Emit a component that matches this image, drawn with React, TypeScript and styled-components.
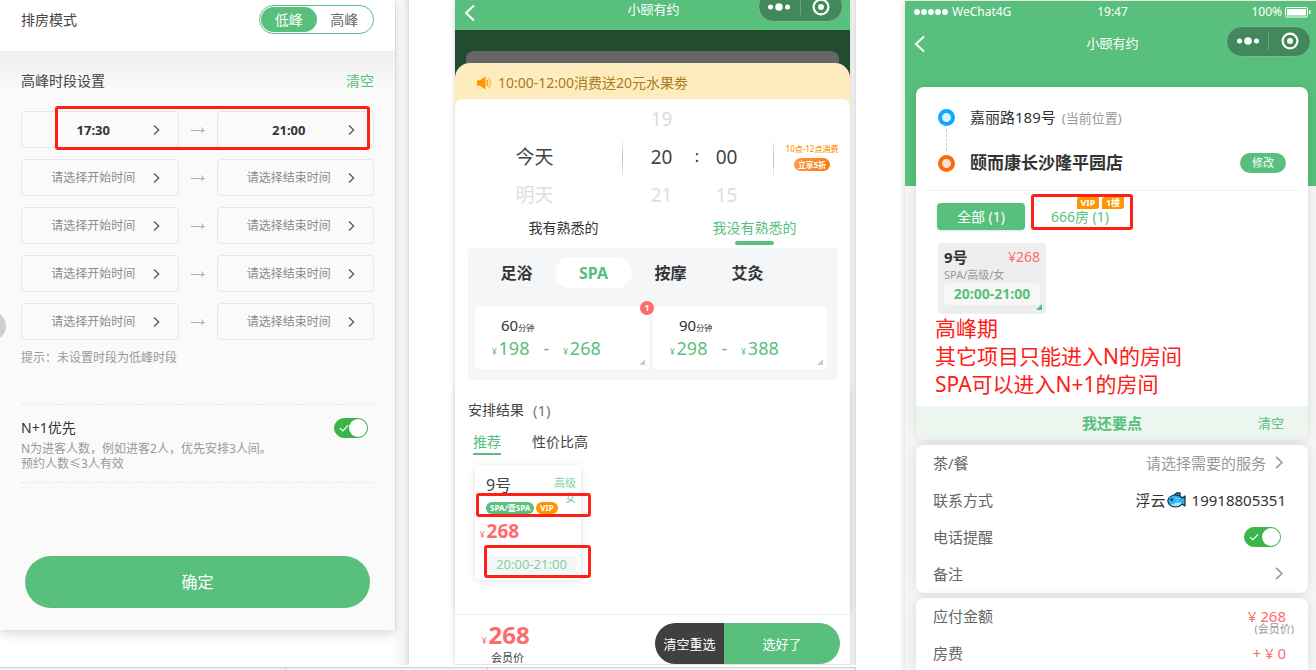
import React from "react";
import styled, { createGlobalStyle, css } from "styled-components";

const green = "#58c07c";
const coral = "#ff6b6b";
const orange = "#ff9500";
const markRed = "#ff2015";

const GlobalStyle = createGlobalStyle`
  * { box-sizing: border-box; }
  body {
    margin: 0;
    background: #fff;
    color: #333;
    font-family: "Noto Sans", "Noto Sans CJK SC", sans-serif;
    font-size: 14px;
    line-height: 20px;
  }
  button, input { font: inherit; color: inherit; margin: 0; padding: 0; border: 0; background: none; }
  button { cursor: pointer; }
  h1, h2, p { margin: 0; font-weight: 400; font-size: inherit; }
`;

/* ---------- page ---------- */

const Page = styled.main`
  display: grid;
  grid-template-columns: minmax(0, 856fr) minmax(0, 411fr);
  grid-template-rows: minmax(0, 1fr);
  column-gap: 49px;
  height: 100vh;
  min-height: 670px;
  overflow: hidden;
`;
const Board = styled.div`
  min-width: 0;
  display: flex;
  flex-direction: column;
`;
const Panels = styled.div`
  flex: 1;
  display: grid;
  grid-template-columns: minmax(0, 409fr) minmax(0, 447fr);
  padding-bottom: 2px;
  min-height: 0;
`;
const Ruler = styled.div`
  display: flex;
  flex: none;
  height: 3px;
  border-top: 1px solid #cfcfcf;
  background: #f3f3f3;
`;
const RulerCell = styled.span<{ $grow: number }>`
  flex: ${(p) => p.$grow};
  border-right: 1px solid #ccc;
`;
const Mark = styled.span<{ $box: string }>`
  position: absolute;
  inset: ${(p) => p.$box};
  border: 3px solid ${markRed};
  border-radius: 3px;
  pointer-events: none;
  z-index: 2;
`;

/* ---------- shared controls ---------- */

const SwitchBox = styled.span`
  position: relative;
  display: inline-flex;
  svg { position: absolute; left: 5px; top: 6px; pointer-events: none; }
`;
const SwitchInput = styled.input<{ $w: number }>`
  appearance: none;
  width: ${(p) => p.$w}px;
  height: 20px;
  border: 1px solid #3bb54a;
  border-radius: 10px;
  background: #3bb54a;
  cursor: pointer;
  &::after {
    content: "";
    display: block;
    width: 18px;
    height: 18px;
    margin-left: auto;
    border-radius: 9px;
    background: #fff;
  }
`;
function Switch({ id, width }: { id: string; width: number }) {
  return (
    <SwitchBox>
      <SwitchInput id={id} type="checkbox" defaultChecked $w={width} />
      <svg width="10" height="8" viewBox="0 0 10 8" fill="none" stroke="#fff" strokeWidth="1.2">
        <path d="M1 4.2 3.8 7 9 1.4" />
      </svg>
    </SwitchBox>
  );
}

const Chevron = ({ color = "#555", size = 12 }: { color?: string; size?: number }) => (
  <svg width={size} height={size} viewBox="0 0 12 12" fill="none" stroke={color} strokeWidth="1.3">
    <path d="M4 1.5 8.7 6 4 10.5" />
  </svg>
);
const BackIcon = () => (
  <svg width="12" height="18" viewBox="0 0 12 18" fill="none" stroke="#fff" strokeWidth="2">
    <path d="M10 1.5 2 9l8 7.5" />
  </svg>
);

const CapsuleBox = styled.div`
  display: flex;
  align-items: center;
  flex: none;
  width: 85px;
  height: 31px;
  border: 1px solid #7fb592;
  border-radius: 16px;
  background: #41895a;
`;
const CapsuleButton = styled.button`
  flex: 1;
  display: flex;
  align-items: center;
  justify-content: center;
  height: 17px;
  & + & { border-left: 1px solid #6aa67f; }
`;
const Capsule = () => (
  <CapsuleBox>
    <CapsuleButton aria-label="更多">
      <svg width="24" height="8" viewBox="0 0 24 8" fill="#fff">
        <circle cx="3.5" cy="4" r="2.5" />
        <circle cx="12" cy="4" r="3.8" />
        <circle cx="20.5" cy="4" r="2.5" />
      </svg>
    </CapsuleButton>
    <CapsuleButton aria-label="关闭">
      <svg width="18" height="18" viewBox="0 0 18 18">
        <circle cx="9" cy="9" r="7.4" fill="none" stroke="#fff" strokeWidth="2.2" />
        <circle cx="9" cy="9" r="3" fill="#fff" />
      </svg>
    </CapsuleButton>
  </CapsuleBox>
);

/* ---------- settings panel ---------- */

const SettingsArea = styled.div`
  padding-right: 13px;
  background: linear-gradient(to left, #e6e6e6, #f6f6f6 5px, #fbfbfb 13px, #fff 14px);
  border-right: 1px solid #ddd;
`;
const Settings = styled.section`
  position: relative;
  height: 630px;
  display: flex;
  flex-direction: column;
  background: #fafafa;
  box-shadow: 0 4px 10px #00000026, 1px 0 0 #e8e8e8;
`;
const ModeBar = styled.div`
  display: flex;
  justify-content: space-between;
  padding: 5px 21px 17px;
  background: #fff;
  line-height: 29px;
  color: #444;
`;
const ModeToggle = styled.div`
  display: flex;
  width: 115px;
  height: 29px;
  padding: 1px;
  border: 1px solid ${green};
  border-radius: 15px;
`;
const ModeOption = styled.button<{ $on?: boolean }>`
  flex: 1;
  line-height: 25px;
  border-radius: 13px;
  color: ${(p) => (p.$on ? "#fff" : "#666")};
  background: ${(p) => (p.$on ? green : "transparent")};
`;
const SettingsBody = styled.div`
  flex: 1;
  display: flex;
  flex-direction: column;
  padding: 20px 21px 0;
  background: linear-gradient(#efefef, #fafafa 40px);
`;
const TitleRow = styled.div`
  display: flex;
  justify-content: space-between;
  margin-bottom: 20px;
  color: #444;
`;
const TextButton = styled.button<{ $size?: number }>`
  color: ${green};
  font-size: ${(p) => p.$size ?? 14}px;
`;
const Slots = styled.div`
  display: grid;
  gap: 11px;
`;
const SlotRow = styled.div`
  position: relative;
  display: grid;
  grid-template-columns: 1fr 38px 1fr;
  place-items: center stretch;
  > svg { justify-self: center; }
`;
const SlotButton = styled.button<{ $set: boolean }>`
  display: flex;
  align-items: center;
  height: 37px;
  padding: 0 16px 0 15px;
  border: 1px solid #e6e6e6;
  border-radius: 4px;
  font-size: ${(p) => (p.$set ? 13 : 12)}px;
  font-weight: ${(p) => (p.$set ? 700 : 400)};
  color: ${(p) => (p.$set ? "#333" : "#8c8c8c")};
  span { flex: 1; text-align: center; }
`;
const Hint = styled.p`
  padding: 8px 0 36px;
  font-size: 12px;
  color: #999;
`;
const PriorityRow = styled.div`
  display: flex;
  justify-content: space-between;
  align-items: flex-start;
  padding: 13px 6px 11px 0;
  border: dashed #e8e8e8;
  border-width: 1px 0;
`;
const PriorityLabel = styled.label`
  display: block;
  color: #333;
`;
const Note = styled.p`
  font-size: 12px;
  line-height: 15px;
  color: #999;
  margin-top: 3px;
`;
const ConfirmButton = styled.button`
  margin: auto 4px 22px;
  height: 52px;
  border-radius: 26px;
  background: ${green};
  color: #fff;
  font-size: 16px;
`;
const Handle = styled.span`
  position: absolute;
  left: -24px;
  top: 311px;
  width: 30px;
  height: 30px;
  border-radius: 15px;
  background: #d0d0d0;
`;

const slots: [string, string][] = [["17:30", "21:00"], ["", ""], ["", ""], ["", ""], ["", ""]];

function SettingsPanel() {
  return (
    <SettingsArea>
      <Settings>
        <Handle />
        <ModeBar>
          <span>排房模式</span>
          <ModeToggle>
            <ModeOption $on>低峰</ModeOption>
            <ModeOption>高峰</ModeOption>
          </ModeToggle>
        </ModeBar>
        <SettingsBody>
          <TitleRow>
            <h2>高峰时段设置</h2>
            <TextButton>清空</TextButton>
          </TitleRow>
          <Slots>
            {slots.map(([from, to], i) => (
              <SlotRow key={i}>
                <SlotButton $set={!!from}><span>{from || "请选择开始时间"}</span><Chevron /></SlotButton>
                <svg width="14" height="8" viewBox="0 0 14 8" fill="none" stroke="#aaa">
                  <path d="M0 4.5h13M10 1.5l3.2 3-3.2 2" />
                </svg>
                <SlotButton $set={!!to}><span>{to || "请选择结束时间"}</span><Chevron /></SlotButton>
                {i === 0 && <Mark $box="-5px 4px -2px 34px" />}
              </SlotRow>
            ))}
          </Slots>
          <Hint>提示：未设置时段为低峰时段</Hint>
          <PriorityRow>
            <div>
              <PriorityLabel htmlFor="priority">N+1优先</PriorityLabel>
              <Note>N为进客人数，例如进客2人，优先安排3人间。<br />预约人数≤3人有效</Note>
            </div>
            <Switch id="priority" width={34} />
          </PriorityRow>
          <ConfirmButton>确定</ConfirmButton>
        </SettingsBody>
      </Settings>
    </SettingsArea>
  );
}

/* ---------- booking panel ---------- */

const BookingArea = styled.div`
  display: flex;
  padding: 0 6px 0 46px;
  background: linear-gradient(to left, #ddd, #f4f4f4 3px, #f4f4f4 5px, #fff 6px);
`;
const Booking = styled.section`
  flex: 1;
  min-width: 0;
  display: flex;
  flex-direction: column;
  background: #fff;
  border-bottom: 1px solid #e4e4e4;
  box-shadow: 0 0 5px #00000030;
  clip-path: inset(0 -6px 0 -8px);
`;
const ClippedNav = styled.header`
  display: flex;
  align-items: flex-end;
  justify-content: space-between;
  flex: none;
  height: 30px;
  padding: 0 7px 8px 9px;
  overflow: hidden;
  background: ${green};
  color: #fff;
  font-size: 13px;
  > * { flex: 1; display: flex; }
  > h1 { justify-content: center; line-height: 26px; }
  > :last-child { justify-content: flex-end; }
`;
const Backdrop = styled.div`
  padding-top: 21px;
  background: #234b30;
`;
const BackCard = styled.div`
  height: 12px;
  margin: 0 11px;
  border-radius: 8px 8px 0 0;
  background: #666;
`;
const Notice = styled.div`
  display: flex;
  align-items: center;
  gap: 6px;
  height: 44px;
  padding: 4px 22px 8px;
  border-radius: 15px 15px 0 0;
  background: #ffecbe;
  color: #a87c1c;
`;
const Sheet = styled.div`
  position: relative;
  margin-top: -8px;
  border-radius: 8px 8px 0 0;
  background: #fff;
  padding-top: 1px;
`;
const Picker = styled.div`
  display: grid;
  grid-template-columns: 1fr 152px 76px;
  height: 114px;
  font-size: 19px;
  line-height: 38px;
`;
const Wheel = styled.div<{ $pad?: number; $w?: number }>`
  display: flex;
  flex-direction: column;
  align-items: center;
  padding-right: ${(p) => p.$pad ?? 0}px;
  width: ${(p) => (p.$w ? p.$w + "px" : "auto")};
`;
const WheelItem = styled.button<{ $on?: boolean }>`
  height: 38px;
  line-height: 38px;
  color: ${(p) => (p.$on ? "#444" : "#ddd")};
`;
const TimeWheels = styled.div`
  display: flex;
  justify-content: center;
  padding-right: 8px;
  background:
    linear-gradient(#fff, #bbb 50%, #fff) left 38px / 1px 42px no-repeat,
    linear-gradient(#fff, #bbb 50%, #fff) right 38px / 1px 42px no-repeat;
`;
const Colon = styled.span`
  width: 29px;
  padding: 38px 0 0 6px;
  text-align: center;
  font-size: 16px;
  line-height: 36px;
`;
const Deal = styled.div`
  display: flex;
  flex-direction: column;
  align-items: center;
  gap: 4px;
  padding-top: 43px;
  font-size: 8px;
  font-weight: 500;
  line-height: 11px;
  white-space: nowrap;
  color: ${orange};
`;
const DealTag = styled.b`
  padding: 0 4px;
  height: 13px;
  line-height: 13px;
  border-radius: 7px;
  background: linear-gradient(90deg, #ff9a3d, #f57a16);
  color: #fff;
`;
const GuestTabs = styled.div`
  display: flex;
  height: 34px;
  padding-left: 13px;
`;
const GuestTab = styled.button<{ $on?: boolean }>`
  flex: 1;
  display: flex;
  flex-direction: column;
  align-items: center;
  padding-top: 4px;
  color: ${(p) => (p.$on ? green : "#333")};
  ${(p) => p.$on && css`
    &::after { content: ""; width: 39px; height: 4px; margin-top: 3px; border-radius: 2px; background: ${green}; }
  `}
`;
const Services = styled.div`
  margin: 0 12px 11px 13px;
  padding: 9px 11px 11px 7px;
  border-radius: 4px;
  background: #f4f6f8;
`;
const ServiceTabs = styled.div`
  display: flex;
  padding-left: 3px;
  margin-bottom: 18px;
`;
const ServiceTab = styled.button<{ $on?: boolean }>`
  width: 77px;
  height: 31px;
  border-radius: 16px;
  font-size: 16px;
  font-weight: 700;
  color: ${(p) => (p.$on ? green : "#333")};
  background: ${(p) => (p.$on ? "#fff" : "transparent")};
`;
const Durations = styled.div`
  display: flex;
  gap: 4px;
`;
const corner = (color: string) => css`
  &::after {
    content: "";
    position: absolute;
    right: 4px;
    bottom: 4px;
    border: solid transparent;
    border-width: 3px;
    border-right-color: ${color};
    border-bottom-color: ${color};
  }
`;
const Duration = styled.button`
  position: relative;
  flex: 1;
  height: 63px;
  padding: 8px 17px 9px;
  border-radius: 4px;
  background: #fff;
  text-align: left;
  ${corner("#ccc")}
`;
const Minutes = styled.div`
  padding-left: 9px;
  font-size: 15px;
  line-height: 22px;
  small { font-size: 8px; line-height: 1; }
`;
const Range = styled.div`
  display: flex;
  gap: 14px;
  font-size: 18px;
  line-height: 24px;
  color: ${green};
`;
const Price = styled.span<{ $size: number; $bold?: boolean; $color?: string }>`
  font-size: ${(p) => p.$size}px;
  font-weight: ${(p) => (p.$bold ? 700 : 400)};
  color: ${(p) => p.$color ?? "inherit"};
  white-space: nowrap;
  small { font-size: 8px; font-weight: 400; line-height: 1; padding-right: 2px; }
`;
const Count = styled.span`
  position: absolute;
  right: -5px;
  top: -5px;
  width: 14px;
  height: 14px;
  border-radius: 7px;
  background: ${coral};
  color: #fff;
  font-size: 9px;
  font-weight: 700;
  line-height: 14px;
  text-align: center;
  z-index: 1;
`;
const Results = styled.div`
  flex: 1;
  padding: 9px 13px 0;
  box-shadow: 0 -3px 8px #00000018;
`;
const ResultTitle = styled.h2`
  display: flex;
  gap: 9px;
  color: #444;
  span { font-size: 15px; color: #777; }
`;
const SortTabs = styled.div`
  display: flex;
  gap: 31px;
  padding: 11px 5px 10px;
`;
const SortTab = styled.button<{ $on?: boolean }>`
  height: 24px;
  color: ${(p) => (p.$on ? green : "#444")};
  border-bottom: 2px solid ${(p) => (p.$on ? green : "transparent")};
`;
const Worker = styled.div`
  position: relative;
  width: 106px;
  height: 115px;
  margin-left: 7px;
  padding: 10px 5px;
  border-radius: 4px;
  background: #fff;
  box-shadow: 0 1px 7px #00000020;
`;
const WorkerHead = styled.div`
  display: flex;
  justify-content: space-between;
  height: 27px;
  padding-left: 6px;
  font-size: 16px;
  color: #444;
`;
const Grade = styled.span`
  font-size: 11px;
  line-height: 15px;
  text-align: right;
  color: #86d0a0;
`;
const Tags = styled.div`
  display: flex;
  gap: 2px;
  padding-left: 6px;
`;
const Tag = styled.span<{ $bg: string }>`
  height: 12px;
  padding: 0 4px;
  border-radius: 6px;
  background: ${(p) => p.$bg};
  color: #fff;
  font-size: 8px;
  font-weight: 700;
  line-height: 12px;
  white-space: nowrap;
`;
const WorkerPrice = styled.div`
  margin: 4px 0 10px;
  line-height: 26px;
`;
const TimeChip = styled.div`
  margin-left: 7px;
  border-radius: 3px;
  background: #f5f6f8;
  color: #86cfa0;
  font-size: 13px;
  line-height: 16px;
  text-align: center;
`;
const Checkout = styled.footer`
  display: flex;
  justify-content: space-between;
  flex: none;
  height: 50px;
  padding: 8px 10px 0 27px;
  border-top: 1px solid #eef0f6;
`;
const Total = styled.div`
  line-height: 24px;
  p { padding-left: 9px; font-size: 11px; line-height: 13px; color: #444; }
`;
const Actions = styled.div`
  display: flex;
  overflow: hidden;
  width: 185px;
  border-radius: 21px;
`;
const Action = styled.button<{ $bg: string; $grow: number }>`
  flex: ${(p) => p.$grow} 0 0;
  background: ${(p) => p.$bg};
  color: #fff;
  font-size: 13px;
  white-space: nowrap;
`;

const services = ["足浴", "SPA", "按摩", "艾灸"];
const durations = [
  { minutes: 60, low: 198, high: 268, count: 1 },
  { minutes: 90, low: 298, high: 388 },
];

function BookingPanel() {
  return (
    <BookingArea>
      <Booking>
        <ClippedNav>
          <button aria-label="返回"><BackIcon /></button>
          <h1>小颐有约</h1>
          <div><Capsule /></div>
        </ClippedNav>
        <Backdrop>
          <BackCard />
          <Notice>
            <svg width="15" height="14" viewBox="0 0 15 14" fill={orange}>
              <path d="M0 4.2h3L8.500.5v13L3 9.800H0z" />
              <path d="M9.800 4.2q2 2.800 0 5.600" fill="none" stroke={orange} strokeWidth="1.300" />
              <path d="M11.600 2q4 5 0 10" fill="none" stroke="#ffb84d" strokeWidth="1.300" />
            </svg>
            10:00-12:00消费送20元水果劵
          </Notice>
        </Backdrop>
        <Sheet>
          <Picker>
            <Wheel $pad={8}>
              <WheelItem aria-hidden="true" />
              <WheelItem $on>今天</WheelItem>
              <WheelItem>明天</WheelItem>
            </Wheel>
            <TimeWheels>
              <Wheel $w={36}>
                <WheelItem>19</WheelItem>
                <WheelItem $on>20</WheelItem>
                <WheelItem>21</WheelItem>
              </Wheel>
              <Colon>:</Colon>
              <Wheel $w={36}>
                <WheelItem aria-hidden="true" />
                <WheelItem $on>00</WheelItem>
                <WheelItem>15</WheelItem>
              </Wheel>
            </TimeWheels>
            <Deal>
              10点-12点消费
              <DealTag>立享5折</DealTag>
            </Deal>
          </Picker>
          <GuestTabs>
            <GuestTab>我有熟悉的</GuestTab>
            <GuestTab $on>我没有熟悉的</GuestTab>
          </GuestTabs>
          <Services>
            <ServiceTabs>
              {services.map((s) => <ServiceTab key={s} $on={s === "SPA"}>{s}</ServiceTab>)}
            </ServiceTabs>
            <Durations>
              {durations.map((d) => (
                <Duration key={d.minutes}>
                  <Minutes>{d.minutes}<small>分钟</small></Minutes>
                  <Range>
                    <Price $size={18}><small>¥</small>{d.low}</Price>
                    <span>-</span>
                    <Price $size={18}><small>¥</small>{d.high}</Price>
                  </Range>
                  {d.count && <Count>{d.count}</Count>}
                </Duration>
              ))}
            </Durations>
          </Services>
        </Sheet>
        <Results>
          <ResultTitle>安排结果 <span>(1)</span></ResultTitle>
          <SortTabs>
            <SortTab $on>推荐</SortTab>
            <SortTab>性价比高</SortTab>
          </SortTabs>
          <Worker>
            <WorkerHead>
              9号
              <Grade>高级<br />女</Grade>
            </WorkerHead>
            <Tags>
              <Tag $bg={green}>SPA/壹SPA</Tag>
              <Tag $bg={orange}>VIP</Tag>
            </Tags>
            <WorkerPrice><Price $size={19} $bold $color={coral}><small>¥</small>268</Price></WorkerPrice>
            <TimeChip>20:00-21:00</TimeChip>
            <Mark $box="28px -10px 63px 1px" />
            <Mark $box="80px -10px 2px 9px" />
          </Worker>
        </Results>
        <Checkout>
          <Total>
            <Price $size={24} $bold $color={coral}><small>¥</small>268</Price>
            <p>会员价</p>
          </Total>
          <Actions>
            <Action $bg="#404040" $grow={69}>清空重选</Action>
            <Action $bg={green} $grow={116}>选好了</Action>
          </Actions>
        </Checkout>
      </Booking>
    </BookingArea>
  );
}

/* ---------- order panel ---------- */

const Order = styled.section`
  min-width: 0;
  display: flex;
  flex-direction: column;
  margin-top: 1px;
  background: #f5f5f5;
  box-shadow: 0 0 6px #00000030;
`;
const OrderTop = styled.div`
  flex: none;
  height: 185px;
  padding: 0 5px 0 9px;
  background: ${green};
  color: #fff;
`;
const ThreeCols = styled.div<{ $h: number }>`
  display: grid;
  grid-template-columns: 1fr auto 1fr;
  align-items: center;
  height: ${(p) => p.$h}px;
  > :last-child { justify-self: end; }
  > :first-child { justify-self: start; }
`;
const Status = styled(ThreeCols)`
  font-size: 12px;
  line-height: 22px;
`;
const StatusGroup = styled.span`
  display: flex;
  align-items: center;
  gap: 3px;
`;
const Nav = styled(ThreeCols)`
  font-size: 13px;
  margin-top: 1px;
  button { display: flex; }
  > h1 { padding-top: 3px; }
  > :first-child { padding-top: 6px; }
`;
const Cards = styled.div`
  flex: 1;
  display: flex;
  flex-direction: column;
  gap: 5px;
  margin: -99px 8px 0 11px;
`;
const Card = styled.div<{ $last?: boolean }>`
  flex: ${(p) => (p.$last ? "1 0 auto" : "none")};
  position: relative;
  overflow: hidden;
  border-radius: ${(p) => (p.$last ? "8px 8px 0 0" : "8px")};
  background: #fff;
  box-shadow: 0 0 12px #0000001a;
`;
const Places = styled.div`
  margin: 0 8px;
  padding: 18px 14px 15px;
  border-bottom: 1px solid #f2f2f2;
`;
const Place = styled.div`
  display: grid;
  grid-template-columns: 32px 1fr auto;
  align-items: center;
  height: 24px;
`;
const Pin = styled.span<{ $c: string; $in: string }>`
  width: 17px;
  height: 17px;
  border: 4px solid ${(p) => p.$c};
  border-radius: 9px;
  background: ${(p) => p.$in};
`;
const Here = styled.span`
  font-size: 15px;
  small { font-size: 13px; color: #999; margin-left: 6px; }
`;
const Link = styled.div`
  height: 22px;
  margin-left: 8px;
  border-left: 1px dashed #ccc;
`;
const Store = styled.b`
  font-size: 17px;
`;
const EditButton = styled.button`
  width: 46px;
  height: 20px;
  border-radius: 10px;
  background: ${green};
  color: #fff;
  font-size: 11px;
`;
const RoomTabs = styled.div`
  display: flex;
  gap: 9px;
  padding: 12px 21px 13px;
`;
const RoomTab = styled.button<{ $on?: boolean }>`
  position: relative;
  width: ${(p) => (p.$on ? 88 : 92)}px;
  height: 27px;
  border-radius: 4px;
  background: ${(p) => (p.$on ? green : "#fff")};
  color: ${(p) => (p.$on ? "#fff" : green)};
  box-shadow: ${(p) => (p.$on ? "0 1px 3px #00000020" : "none")};
`;
const RoomFlags = styled.span`
  position: absolute;
  right: 2px;
  top: -6px;
  display: flex;
  gap: 3px;
`;
const RoomFlag = styled.span`
  width: 22px;
  border-radius: 3px 0;
  background: ${orange};
  color: #fff;
  font-size: 9px;
  font-weight: 700;
  line-height: 12px;
`;
const Pick = styled.div`
  position: relative;
  width: 108px;
  height: 71px;
  margin-left: 22px;
  padding: 4px 6px;
  border-radius: 4px;
  background: #eee;
  ${corner(green)}
  p { font-size: 11px; line-height: 16px; color: #999; }
`;
const PickHead = styled.div`
  display: flex;
  justify-content: space-between;
  b { font-size: 15px; }
  span { color: ${coral}; }
`;
const PickTime = styled.div`
  border-radius: 4px;
  background: #f7f7f7;
  color: ${green};
  font-weight: 700;
  line-height: 22px;
  text-align: center;
`;
const Remark = styled.p`
  padding: 0 19px 8px;
  font-size: 21px;
  line-height: 28px;
  color: ${markRed};
`;
const MoreBar = styled.div`
  display: grid;
  grid-template-columns: 1fr auto 1fr;
  align-items: center;
  height: 34px;
  padding: 0 24px;
  background: #ecf6ef;
`;
const MoreButton = styled.button`
  grid-column: 2;
  color: ${green};
  font-size: 15px;
  font-weight: 700;
`;
const ClearButton = styled(TextButton)`
  justify-self: end;
`;
const Row = styled.div`
  position: relative;
  display: flex;
  align-items: center;
  justify-content: space-between;
  height: 37px;
  padding: 0 22px 2px 17px;
  font-size: 15px;
  color: #666;
`;
const RowButton = styled.button`
  display: flex;
  align-items: center;
  gap: 5px;
  color: #999;
`;
const Contact = styled.span`
  display: flex;
  align-items: center;
  color: #333;
  svg { margin: 0 6px 0 1px; }
`;
const SwitchWrap = styled.span`
  display: flex;
  padding-right: 5px;
`;
const Amount = styled.span`
  color: ${coral};
`;
const Member = styled.small`
  position: absolute;
  right: 14px;
  top: 25px;
  font-size: 11px;
  line-height: 12px;
  color: #999;
`;

const Fish = () => (
  <svg width="19" height="16" viewBox="0 0 19 16" strokeLinejoin="round">
    <path d="M6 4 10 .8h3V5z" fill="#2aa5e0" stroke="#152a38" strokeWidth="1.200" />
    <path d="M.8 8.500C1.500 5 5 3 8.500 3c3 0 5.300 1.200 6.700 3L18 4v10l-2.800-2c-1.700 2.200-4.200 3-7 3C4 15 .8 12 .8 8.500z" fill="#2db4ee" stroke="#152a38" strokeWidth="1.200" />
    <path d="M3 12.500c3 .5 4.500-2 7.500-2.300 2-.2 3.500.2 4.500.8-1.800 2.300-4 3.200-6.800 3.200-2 0-4-.6-5.200-1.700z" fill="#a9dcf5" />
    <circle cx="4.800" cy="7.800" r="1.200" fill="#10202b" />
    <path d="M8.500 6.500h1.200M11.500 6.500h1.200M10 8.500h1.200" stroke="#c8ecfb" />
  </svg>
);

function OrderPanel() {
  return (
    <Order>
      <OrderTop>
        <Status $h={22}>
          <StatusGroup>
            <svg width="35" height="6" viewBox="0 0 35 6" fill="#fff">
              {[3, 10, 17, 24, 31].map((x) => <circle key={x} cx={x} cy="3" r="2.900" />)}
            </svg>
            WeChat4G
          </StatusGroup>
          <span>19:47</span>
          <StatusGroup>
            100%
            <svg width="26" height="11" viewBox="0 0 26 11">
              <rect x=".5" y=".5" width="22" height="9.500" rx="1.500" fill="none" stroke="#fff" />
              <rect x="2" y="2" width="19" height="6.500" fill="#fff" />
              <path d="M24 3.500h1.500v3.500H24z" fill="#fff" />
            </svg>
          </StatusGroup>
        </Status>
        <Nav $h={34}>
          <button aria-label="返回"><BackIcon /></button>
          <h1>小颐有约</h1>
          <Capsule />
        </Nav>
      </OrderTop>
      <Cards>
        <Card>
          <Places>
            <Place>
              <Pin $c="#0fa8ff" $in="#dff3ff" />
              <Here>嘉丽路189号<small>(当前位置)</small></Here>
            </Place>
            <Link />
            <Place>
              <Pin $c="#ff6a0f" $in="#ffe3d2" />
              <Store>颐而康长沙隆平园店</Store>
              <EditButton>修改</EditButton>
            </Place>
          </Places>
          <RoomTabs>
            <RoomTab $on>全部 (1)</RoomTab>
            <RoomTab>
              666房 (1)
              <RoomFlags><RoomFlag>VIP</RoomFlag><RoomFlag>1楼</RoomFlag></RoomFlags>
              <Mark $box="-9px -7px 0 -3px" />
            </RoomTab>
          </RoomTabs>
          <Pick>
            <PickHead><b>9号</b><span>¥268</span></PickHead>
            <p>SPA/高级/女</p>
            <PickTime>20:00-21:00</PickTime>
          </Pick>
          <Remark>高峰期<br />其它项目只能进入N的房间<br />SPA可以进入N+1的房间</Remark>
          <MoreBar>
            <MoreButton>我还要点</MoreButton>
            <ClearButton $size={13}>清空</ClearButton>
          </MoreBar>
        </Card>
        <Card>
          <Row>茶/餐<RowButton>请选择需要的服务<Chevron color="#999" size={15} /></RowButton></Row>
          <Row>联系方式<Contact>浮云<Fish />19918805351</Contact></Row>
          <Row>
            <label htmlFor="call">电话提醒</label>
            <SwitchWrap><Switch id="call" width={37} /></SwitchWrap>
          </Row>
          <Row>备注<RowButton aria-label="备注"><Chevron color="#999" size={15} /></RowButton></Row>
        </Card>
        <Card $last>
          <Row>应付金额<Amount>¥ 268</Amount><Member>(会员价)</Member></Row>
          <Row>房费<Amount>+ ¥ 0</Amount></Row>
        </Card>
      </Cards>
    </Order>
  );
}

export default function App() {
  return (
    <>
      <GlobalStyle />
      <Page>
        <Board>
          <Panels>
            <SettingsPanel />
            <BookingPanel />
          </Panels>
          <Ruler>
            <RulerCell $grow={286} />
            <RulerCell $grow={202} />
            <RulerCell $grow={368} />
          </Ruler>
        </Board>
        <OrderPanel />
      </Page>
    </>
  );
}
